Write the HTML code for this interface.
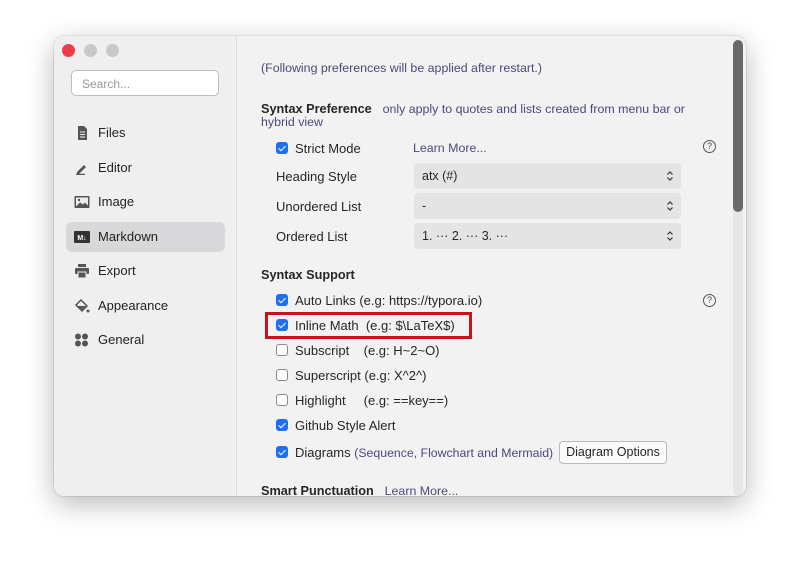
<!DOCTYPE html>
<html><head><style>
*{margin:0;padding:0;box-sizing:border-box}
body{width:800px;height:569px;background:#fff;font-family:"Liberation Sans",sans-serif;font-size:13px;color:#262626;position:relative;overflow:hidden}
.win{position:absolute;left:54px;top:36px;width:692px;height:460px;border-radius:10px;background:#f2f2f2;box-shadow:0 8px 28px rgba(0,0,0,.28),0 0 0 1px rgba(0,0,0,.08);overflow:hidden}
.side{position:absolute;left:0;top:0;width:183px;height:460px;background:#efefef;border-right:1px solid #dcdcdc}
.dot{position:absolute;top:8px;width:13px;height:13px;border-radius:50%;background:#c8c8c8}
.search{position:absolute;left:17px;top:34px;width:148px;height:26px;border:1px solid #bdbdbd;border-radius:5px;background:#fff;color:#999;padding:6px 10px;font-size:12px}
.nav{position:absolute;left:12px;width:159px;height:30px;border-radius:6px;font-size:13px;color:#222;line-height:30px;padding-left:32px}
.nav.sel{background:#d8d8da}
.ic{position:absolute;left:8px;top:8px;width:16px;height:14px}
.t{position:absolute;white-space:nowrap}
.b{font-weight:bold;font-size:12.7px}
.link{color:#4a4a7a;font-size:12.4px}
.cb{position:absolute;width:12px;height:12px;border-radius:3px}
.cb.on{background:#1f6ff2}
.cb.on:after{content:"";position:absolute;left:3.5px;top:1.5px;width:3px;height:6px;border:solid #fff;border-width:0 1.6px 1.6px 0;transform:rotate(45deg)}
.cb.off{border:1px solid #8a8a8a;background:#fff}
.sel2{position:absolute;width:267px;height:26px;background:#e4e4e4;border-radius:4px;padding:6px 8px;font-size:12.5px}
.arr{position:absolute;right:7px;top:7px;width:8px;height:12px}
.q{position:absolute;width:13px;height:13px;border:1px solid #555;border-radius:50%;font-size:9px;text-align:center;line-height:11px;color:#444}
</style></head><body>
<div class="win">
 <div class="side">
  <div class="dot" style="left:8px;background:#ee3e45"></div>
  <div class="dot" style="left:30px"></div>
  <div class="dot" style="left:52px"></div>
  <div class="search">Search...</div>
  <div class="nav" style="top:82px"><svg class="ic" viewBox="0 0 16 14"><path d="M4 0h6l3 3v11H4z" fill="#555"/><path d="M6 6h5M6 8.5h5M6 11h5" stroke="#eee" stroke-width="1"/></svg>Files</div>
  <div class="nav" style="top:117px"><svg class="ic" viewBox="0 0 16 14"><path d="M3 11l7-7 2 2-7 7H3z" fill="#555"/><path d="M2 13.5h9" stroke="#555" stroke-width="1.5"/></svg>Editor</div>
  <div class="nav" style="top:151px"><svg class="ic" viewBox="0 0 16 14"><rect x="0.5" y="1" width="15" height="12" rx="1" fill="#555"/><rect x="2" y="2.5" width="12" height="9" fill="#eee"/><path d="M2 11.5l4-4 3 2 2-2 3 3v1z" fill="#555"/><circle cx="5" cy="5" r="1.2" fill="#555"/></svg>Image</div>
  <div class="nav sel" style="top:186px"><svg class="ic" viewBox="0 0 16 14"><rect x="0" y="1" width="16" height="12" rx="1" fill="#333"/><text x="8" y="10" font-size="7" fill="#fff" text-anchor="middle" font-family="Liberation Sans" font-weight="bold">M↓</text></svg>Markdown</div>
  <div class="nav" style="top:220px"><svg class="ic" viewBox="0 0 16 14"><rect x="4" y="0" width="8" height="3" fill="#555"/><rect x="1" y="4" width="14" height="6" rx="1" fill="#555"/><rect x="4" y="8" width="8" height="6" fill="#555" stroke="#eee"/></svg>Export</div>
  <div class="nav" style="top:255px"><svg class="ic" viewBox="0 0 16 14"><path d="M7 1l6 6-5 5-6-6z" fill="none" stroke="#555" stroke-width="1.5"/><path d="M3 7h9l-4 4z" fill="#555"/><circle cx="14" cy="12" r="1.5" fill="#555"/></svg>Appearance</div>
  <div class="nav" style="top:289px"><svg class="ic" viewBox="0 0 16 14"><circle cx="4" cy="3.5" r="3" fill="#555"/><circle cx="11" cy="3.5" r="3" fill="#555"/><circle cx="4" cy="10.5" r="3" fill="#555"/><circle cx="11" cy="10.5" r="3" fill="#555"/></svg>General</div>
 </div>
 <div style="position:absolute;left:679px;top:4px;width:10px;height:456px;background:#e6e6e6;border-radius:5px"></div>
 <div style="position:absolute;left:679px;top:4px;width:10px;height:172px;background:#6a6a6a;border-radius:5px"></div>
</div>
<div class="t link" style="left:261px;top:61px">(Following preferences will be applied after restart.)</div>
<div class="t" style="left:261px;top:101px"><span class="b">Syntax Preference</span> &nbsp; <span class="link">only apply to quotes and lists created from menu bar or</span></div>
<div class="t link" style="left:261px;top:115px">hybrid view</div>
<div class="cb on" style="left:276px;top:142px"></div><div class="t" style="left:295px;top:141px">Strict Mode</div>
<div class="t link" style="left:413px;top:141px">Learn More...</div>
<div class="q" style="left:703px;top:140px">?</div>
<div class="t" style="left:276px;top:169px">Heading Style</div>
<div class="sel2" style="left:414px;top:163px">atx (#)<svg class="arr" viewBox="0 0 8 12"><path d="M1.5 4.5L4 2l2.5 2.5M1.5 7.5L4 10l2.5-2.5" fill="none" stroke="#333" stroke-width="1.2"/></svg></div>
<div class="t" style="left:276px;top:199px">Unordered List</div>
<div class="sel2" style="left:414px;top:193px">-<svg class="arr" viewBox="0 0 8 12"><path d="M1.5 4.5L4 2l2.5 2.5M1.5 7.5L4 10l2.5-2.5" fill="none" stroke="#333" stroke-width="1.2"/></svg></div>
<div class="t" style="left:276px;top:229px">Ordered List</div>
<div class="sel2" style="left:414px;top:223px">1. ··· 2. ··· 3. ···<svg class="arr" viewBox="0 0 8 12"><path d="M1.5 4.5L4 2l2.5 2.5M1.5 7.5L4 10l2.5-2.5" fill="none" stroke="#333" stroke-width="1.2"/></svg></div>
<div class="t b" style="left:261px;top:268px">Syntax Support</div>
<div class="cb on" style="left:276px;top:294px"></div><div class="t" style="left:295px;top:293px">Auto Links (e.g: https://typora.io)</div>
<div class="q" style="left:703px;top:294px">?</div>
<div style="position:absolute;left:265px;top:312px;width:207px;height:27px;border:3px solid #c4141c"></div>
<div class="cb on" style="left:276px;top:319px"></div><div class="t" style="left:295px;top:318px">Inline Math &nbsp;(e.g: $\LaTeX$)</div>
<div class="cb off" style="left:276px;top:344px"></div><div class="t" style="left:295px;top:343px">Subscript &nbsp;&nbsp; (e.g: H~2~O)</div>
<div class="cb off" style="left:276px;top:369px"></div><div class="t" style="left:295px;top:368px">Superscript (e.g: X^2^)</div>
<div class="cb off" style="left:276px;top:394px"></div><div class="t" style="left:295px;top:393px">Highlight &nbsp;&nbsp;&nbsp; (e.g: ==key==)</div>
<div class="cb on" style="left:276px;top:419px"></div><div class="t" style="left:295px;top:418px">Github Style Alert</div>
<div class="cb on" style="left:276px;top:446px"></div><div class="t" style="left:295px;top:445px">Diagrams <span class="link" style="font-size:12.3px">(Sequence, Flowchart and Mermaid)</span></div>
<div style="position:absolute;left:559px;top:441px;width:108px;height:23px;border:1px solid #bbb;border-radius:4px;background:#fafafa;text-align:center;line-height:21px;font-size:12.5px">Diagram Options</div>
<div class="t" style="left:261px;top:483px"><span class="b">Smart Punctuation</span> &nbsp; <span class="link">Learn More...</span></div>
</body></html>
